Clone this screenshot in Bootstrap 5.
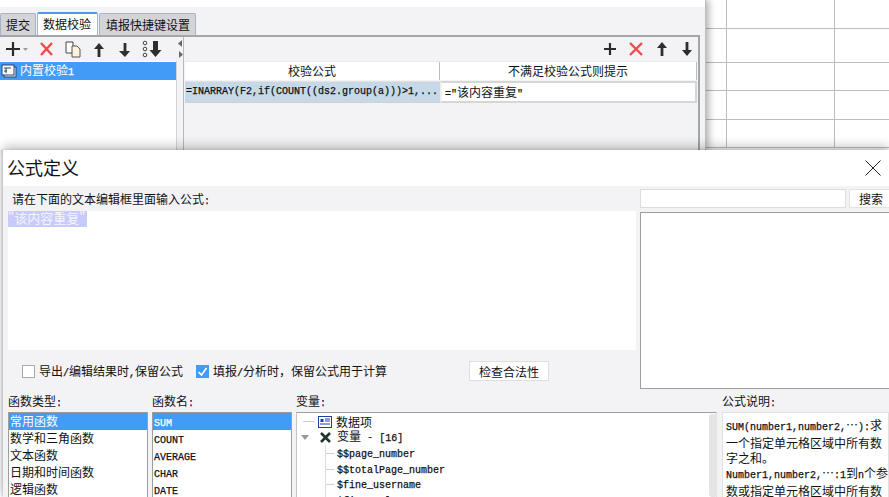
<!DOCTYPE html>
<html lang="zh">
<head>
<meta charset="utf-8">
<title>公式定义</title>
<link href="https://cdn.jsdelivr.net/npm/bootstrap@5.3.0/dist/css/bootstrap.min.css" rel="stylesheet">
<style>
html,body{margin:0;background:#fff;overflow:hidden}
.stage{position:relative;width:889px;height:497px;overflow:hidden;font-family:"Noto Sans CJK SC","Noto Sans",sans-serif;font-size:12px;line-height:17px;color:#111}
.mono{font-family:"Liberation Mono","Noto Sans CJK SC",monospace;font-size:10px;letter-spacing:0;-webkit-text-stroke:.25px currentColor}
.backwin{width:706px;height:150px;padding-top:7px;background:linear-gradient(#fff 7px,#f3f3f5 7px);border-right:1px solid #bdbdbd;box-shadow:3px 0 7px rgba(0,0,0,.3);flex:none;position:relative}
.tabstrip{height:30px;padding-top:6px;gap:1px;border-bottom:2px solid #a3a6a9;margin-right:5px}
.fr-tab{height:22px;padding:2px 5px 0;background:#d4d4d8;border:1px solid #a7b3c4;border-bottom:0;border-radius:2px 2px 0 0;white-space:nowrap;width:36px}
.fr-tab.on{background:#fff;border-top:2px solid #4a9bec;height:23px;margin-top:-1px;padding:1px 5px 0;width:61px}
.fr-tab.wide{width:97px;padding-left:6px}
.panes{height:113px;margin-right:5px;border-right:2px solid #a3a6a9}
.leftpane{width:177px;flex:none;background:#f3f3f5}
.tool{height:24px;padding-left:6px}
.toolr{height:24px;justify-content:flex-end;padding-right:3px;gap:7px}
.leftlist{background:#fff;height:89px;border-right:1px solid #d3d3d3;width:177px;padding-top:1px}
.fr-sel{background:#429bf7;color:#fff;height:18px;line-height:17px;padding-left:1px;gap:3px}
.splitter{width:7px;flex:none;border-right:1px solid #b9b9b9;background:#f3f3f5;padding-top:3px;gap:4px}
.rightpane{flex:1;min-width:0;padding:0 1px}
.hdrrow{height:19px;background:#fff;border-top:1px solid #e9e9e9;text-align:center}
.cellrow{height:22px;margin-top:1px}
.c1{width:255px;flex:none}
.c1h{border-right:1px solid #bdbdbd;line-height:18px}
.hdr2{flex:1;line-height:18px;border-right:1px solid #bdbdbd}
.formula{background:#c6d9e9;border-bottom:1px solid #d0d0d0;border-top:1px solid #e2e2e2;padding-left:1px;line-height:19px;white-space:nowrap;overflow:hidden}
.cell2{flex:1;background:#fff;border:2px solid #d6d6d6;border-left-color:#eee;padding-left:3px;line-height:17px}
.sheet{flex:1;height:150px}
.srow{border-bottom:1px solid #bcbcbc;display:flex}
.srow i{display:block;width:108px;border-right:1px solid #bcbcbc;flex:none}
.srow i:first-child{width:21px}
.dialog{position:absolute;left:3px;top:150px;width:886px;height:347px;background:#fff;box-shadow:0 -4px 10px rgba(0,0,0,.22),-1px 0 3px rgba(0,0,0,.2)}
.dlgtitle{height:36px;padding-left:4px;font-size:18px;line-height:34px}
.dlgtitle span{margin-top:-3px}
.dlgbody{height:311px;background:#f3f3f5}
.col-edit{width:633px;flex:none}
.edit-label{height:25px;padding:4px 0 0 9px;line-height:18px}
.editor{height:139px;background:#fff;margin-left:5px;font-size:13px;line-height:14px}
.edit-sel{display:block;width:79px;background:#c8caf9;color:#f4f4ff;height:16px;white-space:nowrap}
.col-search{flex:1;min-width:0;padding:3px 0 0 4px}
.fr-input{width:206px;height:19px;background:#fff;border:1px solid #dcdcdc}
.fr-btn{width:40px;height:19px;background:#fff;border:1px solid #e3e3e3;border-right:0;padding:0 0 0 9px;font-size:12px;line-height:16px;color:#111;border-radius:0}
.result{height:177px;margin-top:4px;background:#fff;border:1px solid #9e9e9e;border-right:0}
.checks{height:37px;padding-left:19px;margin-top:-36px;position:relative;z-index:1;width:633px}
.chk{width:13px;height:13px;border:1px solid #a9a9a9;background:#fff;flex:none}
.chk.on{background:#429bf7;border-color:#429bf7;color:#fff;margin-left:13px}
.chk-text{margin-left:4px;line-height:17px;white-space:nowrap}
.check-btn{width:80px;height:20px;background:#fff;border:1px solid #dedede;margin-left:82px;padding:0;font-size:12px;line-height:17px;color:#111;border-radius:0;margin-top:-1px;flex:none}
.lowrow{padding:0 0 0 5px;margin-top:2px}
.lblcol{flex:none}
.lbl{height:20px;line-height:17px}
.fr-box{background:#fff;border:1px solid #9e9e9e;border-bottom:0;height:85px;overflow:hidden}
.w1{width:140px;margin-right:4px}
.w2{width:140px;margin-right:4px}
.w3{width:421px;margin-right:5px;position:relative}
.w4{flex:1;min-width:0}
.fr-item{height:17px;line-height:15px;padding-left:1px;white-space:nowrap}
.fr-item.on{background:#429bf7;color:#fff}
.w3box{border-color:#9e9e9e #dcdcdc #dcdcdc #c4c4c4;padding-top:1px}
.tree{height:15.5px;line-height:15px;white-space:nowrap}
.stub0{width:12px;border-top:1px solid #cfcfcf;margin-right:3px;flex:none}
.t0{padding-left:6px}
.t1{padding-left:28px;line-height:14px}
.stub{display:inline-block;width:9px;height:15.5px;margin-right:3px;vertical-align:top;border-left:1px solid #dcdcdc;background:linear-gradient(#cfcfcf,#cfcfcf) 0 8px/100% 1px no-repeat}
.var-ic{margin-left:11px;flex:none}
.var-tx{margin-left:6px}
.var-dash{margin:0 7px}
.scrollbar{position:absolute;right:0;top:22px;width:8px;height:83px;background:#e4e4e4;border-radius:3px}
.desc{border:1px solid #e0e0e0;border-bottom:0;padding:4px 0 0 3px;line-height:15px;height:85px;background:#fff;overflow:hidden;white-space:nowrap}
.dot{color:#3a0a5a}
</style>
</head>
<body>
<div class="stage">
  <div class="d-flex">
    <div class="backwin">
      <div class="tabstrip d-flex align-items-start">
        <div class="fr-tab">提交</div>
        <div class="fr-tab on">数据校验</div>
        <div class="fr-tab wide">填报快捷键设置</div>
      </div>
      <div class="panes d-flex">
        <div class="leftpane">
          <div class="tool d-flex align-items-center">
            <svg width="170" height="20" viewBox="0 0 170 20">
              <path d="M0 10h14M7 3v14" stroke="#2c2c2c" stroke-width="2.2" fill="none"/>
              <path d="M17 9h5l-2.5 3z" fill="#9a9a9a"/>
              <path d="M35 4l11 12M46 4L35 16" stroke="#ef4a48" stroke-width="2.4" fill="none"/>
              <path d="M60 3h7v11h-7z" fill="#fff" stroke="#444"/>
              <path d="M66 7h5l3 3v8h-8z" fill="#fdf3dc" stroke="#555"/>
              <path d="M93 4l-5 6h3.6v8h2.8v-8H98z" fill="#2e2e2e"/>
              <path d="M119 18l5-6h-3.6V4h-2.8v8H113z" fill="#2e2e2e"/>
              <circle cx="139" cy="4" r="1.8" fill="none" stroke="#444"/><circle cx="139" cy="10" r="1.8" fill="none" stroke="#444"/><circle cx="139" cy="16" r="1.8" fill="none" stroke="#444"/>
              <path d="M147 2h5v9h3.5L149.5 18 143.500 11H147z" fill="#2e2e2e"/>
            </svg>
          </div>
          <div class="leftlist">
            <div class="fr-sel d-flex align-items-center">
              <svg width="16" height="14" viewBox="0 0 16 14"><rect x="3" y="3" width="12" height="10" fill="#e9f1fb" stroke="#27406f"/><rect x="1" y="1" width="12" height="10" fill="#fff" stroke="#27406f"/><path d="M3 4h7M5 4v5M3 7h3" stroke="#27406f" fill="none"/></svg>
              <span>内置校验<span class="mono">1</span></span>
            </div>
          </div>
        </div>
        <div class="splitter d-flex flex-column align-items-center">
          <svg width="5" height="7" viewBox="0 0 5 7"><path d="M4 0v7L0 3.500z" fill="#666"/></svg>
          <svg width="5" height="7" viewBox="0 0 5 7"><path d="M1 0v7l4-3.500z" fill="#666"/></svg>
        </div>
        <div class="rightpane">
          <div class="toolr d-flex align-items-center">
            <svg width="14" height="14" viewBox="0 0 14 14"><path d="M1 7h12M7 1v12" stroke="#2c2c2c" stroke-width="2.2" fill="none"/></svg>
            <svg width="16" height="16" viewBox="0 0 16 16" class="ms-1"><path d="M2 2l12 12M14 2L2 14" stroke="#ef4a48" stroke-width="2.400" fill="none"/></svg>
            <svg width="14" height="16" viewBox="0 0 14 16" class="ms-1"><path d="M7 1L2 7h3.600v8h2.800V7H12z" fill="#2e2e2e"/></svg>
            <svg width="14" height="16" viewBox="0 0 14 16" class="ms-1"><path d="M7 15l5-6H8.400V1H5.600v8H2z" fill="#2e2e2e"/></svg>
          </div>
          <div class="hdrrow d-flex">
            <div class="c1 c1h">校验公式</div>
            <div class="hdr2">不满足校验公式则提示</div>
          </div>
          <div class="cellrow d-flex">
            <div class="c1 formula mono">=INARRAY(F2,if(COUNT((ds2.group(a)))&gt;1,...</div>
            <div class="cell2"><span class="mono">=&quot;</span>该内容重复<span class="mono">&quot;</span></div>
          </div>
        </div>
      </div>
    </div>
    <div class="sheet">
      <div class="srow" style="height:29px"><i></i><i></i></div>
      <div class="srow" style="height:34px"><i></i><i></i></div>
      <div class="srow" style="height:28px"><i></i><i></i></div>
      <div class="srow" style="height:29px"><i></i><i></i></div>
      <div class="srow" style="height:28px"><i></i><i></i></div>
    </div>
  </div>

  <div class="dialog">
    <div class="dlgtitle d-flex justify-content-between align-items-center">
      <span>公式定义</span>
      <svg width="16" height="16" viewBox="0 0 16 16" class="me-2"><path d="M.5.500l15 15M15.500.500l-15 15" stroke="#222" fill="none"/></svg>
    </div>
    <div class="dlgbody">
      <div class="d-flex">
        <div class="col-edit">
          <div class="edit-label">请在下面的文本编辑框里面输入公式<span class="mono dot">:</span></div>
          <div class="editor"><span class="edit-sel">"该内容重复"</span></div>
        </div>
        <div class="col-search">
          <div class="d-flex justify-content-between">
            <div class="fr-input"></div>
            <button type="button" class="btn fr-btn text-start">搜索</button>
          </div>
          <div class="result"></div>
        </div>
      </div>
      <div class="checks d-flex align-items-center">
        <span class="chk"></span>
        <span class="chk-text">导出<span class="mono">/</span>编辑结果时<span class="mono">,</span>保留公式</span>
        <span class="chk on d-flex align-items-center justify-content-center"><svg width="11" height="11" viewBox="0 0 11 11"><path d="M1.500 6l3 3 5-7" stroke="#fff" stroke-width="1.600" fill="none"/></svg></span>
        <span class="chk-text">填报<span class="mono">/</span>分析时&#xFF0C;保留公式用于计算</span>
        <button type="button" class="btn check-btn">检查合法性</button>
      </div>
      <div class="lowrow d-flex">
        <div class="lblcol w1">
          <div class="lbl">函数类型<span class="mono dot">:</span></div>
          <div class="fr-box">
            <div class="fr-item on">常用函数</div>
            <div class="fr-item">数学和三角函数</div>
            <div class="fr-item">文本函数</div>
            <div class="fr-item">日期和时间函数</div>
            <div class="fr-item">逻辑函数</div>
          </div>
        </div>
        <div class="lblcol w2">
          <div class="lbl">函数名<span class="mono dot">:</span></div>
          <div class="fr-box">
            <div class="fr-item on"><span class="mono">SUM</span></div>
            <div class="fr-item"><span class="mono">COUNT</span></div>
            <div class="fr-item"><span class="mono">AVERAGE</span></div>
            <div class="fr-item"><span class="mono">CHAR</span></div>
            <div class="fr-item"><span class="mono">DATE</span></div>
          </div>
        </div>
        <div class="lblcol w3">
          <div class="lbl">变量<span class="mono dot">:</span></div>
          <div class="fr-box w3box">
            <div class="tree d-flex align-items-center t0">
              <span class="stub0"></span>
              <svg width="14" height="12" viewBox="0 0 14 12"><rect x=".5" y=".5" width="13" height="11" fill="#fff" stroke="#1c3fa8"/><rect x="2.500" y="3" width="3" height="3" fill="#1c3fa8"/><path d="M7 3h5M7 5h5M2 8h10" stroke="#1c3fa8" fill="none"/></svg>
              <span class="ms-1">数据项</span>
            </div>
            <div class="tree d-flex align-items-center ps-1">
              <svg width="8" height="5" viewBox="0 0 8 5"><path d="M0 0h8L4 5z" fill="#999"/></svg>
              <svg width="11" height="11" viewBox="0 0 11 11" class="var-ic"><path d="M1 1l9 9M10 1l-9 9" stroke="#24332c" stroke-width="2.600" fill="none"/></svg>
              <span class="var-tx">变量<span class="var-dash">-</span><span class="mono">[16]</span></span>
            </div>
            <div class="tree t1"><span class="stub"></span><span class="mono">$$page_number</span></div>
            <div class="tree t1"><span class="stub"></span><span class="mono">$$totalPage_number</span></div>
            <div class="tree t1"><span class="stub"></span><span class="mono">$fine_username</span></div>
            <div class="tree t1"><span class="stub"></span><span class="mono">$fine_role</span></div>
          </div>
          <div class="scrollbar"></div>
        </div>
        <div class="lblcol w4">
          <div class="lbl">公式说明<span class="mono dot">:</span></div>
          <div class="desc">
            <div><span class="mono">SUM(number1,number2,</span>⋯<span class="mono">):</span>求</div>
            <div>一个指定单元格区域中所有数</div>
            <div>字之和。</div>
            <div><span class="mono">Number1,number2,</span>⋯<span class="mono">:1</span>到<span class="mono">n</span>个参</div>
            <div>数或指定单元格区域中所有数</div>
            <div>字。</div>
          </div>
        </div>
      </div>
    </div>
  </div>
</div>
<script src="https://cdn.jsdelivr.net/npm/bootstrap@5.3.0/dist/js/bootstrap.bundle.min.js"></script>
</body>
</html>
